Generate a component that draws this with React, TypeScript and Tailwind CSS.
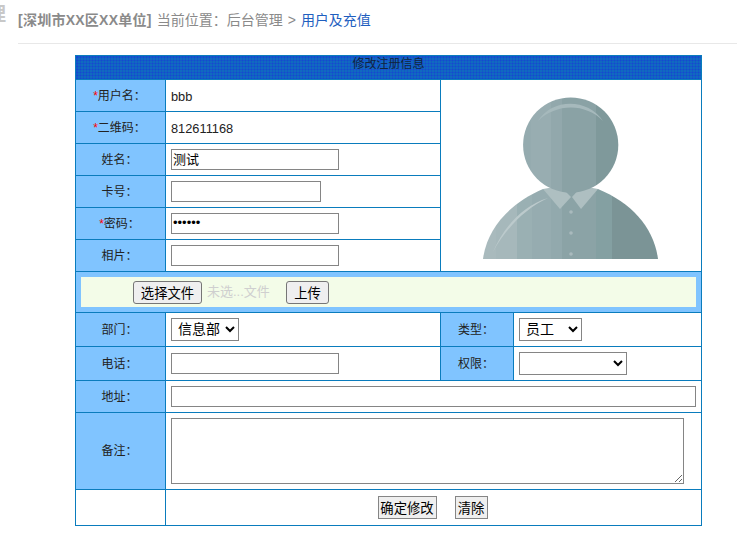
const labelCell = "border border-[#0a7cbd] bg-[#80c4ff] pr-[2px] text-center text-[12px] text-[#222]";
const valueCell = "border border-[#0a7cbd] bg-white pl-[5px] text-[12.8px] text-[#222]";
const inputClass = "block h-[21px] border border-[#858585] bg-white px-[1px] pb-[2px] text-[13px] text-black";
const selectClass = "block h-[23px] border border-[#858585] bg-white pb-[1px] pl-[2px] text-[14px] text-black";
const buttonClass = "h-[23px] rounded-[3px] border border-[#767676] bg-[#efefef] pt-[2px] text-[13.33px] text-black";
const plainButton = "h-[23px] border border-[#858585] bg-[#efefef] pt-[2px] text-[13.33px] text-black";

const Label = ({ text, required, span }: { text: string; required?: boolean; span?: number }) => (
  <td rowSpan={span} className={labelCell}>
    {required && <span className="text-[#f00]">*</span>}
    {text}：
  </td>
);

const Avatar = () => (
  <svg viewBox="441 80 260 191" className="block h-[191px] w-[260px]">
    <defs>
      <clipPath id="head">
        <circle cx="570.7" cy="145" r="47.6" />
      </clipPath>
      <clipPath id="body">
        <path d="M483 259 C487 228 510 203 543 189 L598 189 C632 203 654 228 658 259 Z" />
      </clipPath>
    </defs>
    <g clipPath="url(#body)">
      <rect x="483" y="185" width="13" height="75" fill="#a9babd" />
      <rect x="496" y="185" width="21" height="75" fill="#a6b8bb" />
      <rect x="517" y="185" width="15" height="75" fill="#9ab0b3" />
      <rect x="532" y="185" width="19" height="75" fill="#96acb0" />
      <rect x="551" y="185" width="11" height="75" fill="#92a9ad" />
      <rect x="562" y="185" width="34" height="75" fill="#8ba3a6" />
      <rect x="596" y="185" width="16" height="75" fill="#84a0a2" />
      <rect x="612" y="185" width="46" height="75" fill="#7b9496" />
    </g>
    <path d="M493 252 C503 228 522 206 548 198 C526 208 506 228 493 252 Z" fill="#bccacc" />
    <path d="M543 189 L560 209 L571 197 L560 186 Z" fill="#aebfc1" />
    <path d="M598 189 L581 209 L572 197 L582 186 Z" fill="#aebfc1" />
    <g clipPath="url(#head)">
      <rect x="523" y="97" width="8" height="96" fill="#95abaf" />
      <rect x="531" y="97" width="20" height="96" fill="#98adb1" />
      <rect x="551" y="97" width="11" height="96" fill="#92a8ac" />
      <rect x="562" y="97" width="34" height="96" fill="#8aa2a5" />
      <rect x="596" y="97" width="23" height="96" fill="#7f999b" />
    </g>
    <path d="M538 121 C552 98 588 98 603 121 C586 103 556 103 538 121 Z" fill="#a6b9bc" />
    <circle cx="571" cy="212" r="1.8" fill="#a9babd" />
    <circle cx="571" cy="233" r="1.8" fill="#a9babd" />
    <circle cx="571" cy="254" r="1.8" fill="#a9babd" />
  </svg>
);

export default function App() {
  return (
    <div
      className="relative h-[539px] w-[737px] overflow-hidden bg-white"
      style={{ fontFamily: '"Liberation Sans", "Noto Sans CJK SC", sans-serif' }}
    >
      <span className="absolute left-[-13px] top-[3px] text-[19px] font-bold leading-[24px] text-[#c8c8c8]">理</span>

      <div className="ml-[18px] flex h-[44px] items-center border-b border-[#e8e8e8] pb-[2px] text-[14px] text-[#8a8a8a]">
        <span className="font-bold tracking-[0.25px]">[深圳市XX区XX单位]</span>
        <span className="ml-[5px]">当前位置：后台管理</span>
        <span className="ml-[5px]">&gt;</span>
        <span className="ml-[5px] text-[#1f5fbf]">用户及充值</span>
      </div>

      <div className="ml-[75px] mt-[11px]">
        <table className="w-[626px] table-fixed border-collapse">
          <colgroup>
            <col className="w-[90px]" />
            <col className="w-[275px]" />
            <col className="w-[73px]" />
            <col className="w-[188px]" />
          </colgroup>
          <tbody>
            <tr className="h-[24px]">
              <td
                colSpan={4}
                className="border border-[#0a7cbd] bg-[#1169b8] bg-[image:repeating-linear-gradient(90deg,#1648d080_0_2px,#0a8cb080_2px_3px),repeating-linear-gradient(0deg,#1648d0_0_2px,#0a8cb0_2px_3px)] pb-[6px] text-center text-[12px] leading-[17px] text-[#10243d]"
              >
                修改注册信息
              </td>
            </tr>
            <tr className="h-[32px]">
              <Label text="用户名" required />
              <td className={`${valueCell} pt-[2px]`}>bbb</td>
              <td colSpan={2} rowSpan={6} className="border border-[#0a7cbd] bg-white p-0">
                <Avatar />
              </td>
            </tr>
            <tr className="h-[32px]">
              <Label text="二维码" required />
              <td className={`${valueCell} pt-[2px]`}>812611168</td>
            </tr>
            <tr className="h-[32px]">
              <Label text="姓名" />
              <td className={valueCell}>
                <input defaultValue="测试" className={`${inputClass} w-[168px]`} />
              </td>
            </tr>
            <tr className="h-[32px]">
              <Label text="卡号" />
              <td className={valueCell}>
                <input className={`${inputClass} w-[150px]`} />
              </td>
            </tr>
            <tr className="h-[32px]">
              <Label text="密码" required />
              <td className={valueCell}>
                <input type="password" defaultValue="123456" className={`${inputClass} w-[168px]`} />
              </td>
            </tr>
            <tr className="h-[32px]">
              <Label text="相片" />
              <td className={valueCell}>
                <input className={`${inputClass} w-[168px]`} />
              </td>
            </tr>
            <tr className="h-[41px]">
              <td colSpan={4} className="border border-[#0a7cbd] bg-[#80c4ff] px-[5px] py-0">
                <div className="flex h-[30px] items-center bg-[#f3fce8] pl-[52px]">
                  <button className={`${buttonClass} w-[69px]`}>选择文件</button>
                  <span className="ml-[5px] w-[67px] whitespace-nowrap text-[13px] text-[#cfcfcf]">未选...文件</span>
                  <button className={`${buttonClass} ml-[12px] w-[43px]`}>上传</button>
                </div>
              </td>
            </tr>
            <tr className="h-[34px]">
              <Label text="部门" />
              <td className={valueCell}>
                <select className={`${selectClass} w-[68px]`}>
                  <option>信息部</option>
                </select>
              </td>
              <Label text="类型" />
              <td className={valueCell}>
                <select className={`${selectClass} w-[63px]`}>
                  <option>员工</option>
                </select>
              </td>
            </tr>
            <tr className="h-[34px]">
              <Label text="电话" />
              <td className={valueCell}>
                <input className={`${inputClass} w-[168px]`} />
              </td>
              <Label text="权限" />
              <td className={valueCell}>
                <select className={`${selectClass} w-[108px]`}>
                  <option></option>
                </select>
              </td>
            </tr>
            <tr className="h-[32px]">
              <Label text="地址" />
              <td colSpan={3} className={valueCell}>
                <input className={`${inputClass} w-[525px]`} />
              </td>
            </tr>
            <tr className="h-[77px]">
              <Label text="备注" />
              <td colSpan={3} className={valueCell}>
                <textarea className="block h-[66px] w-[513px] border border-[#858585] bg-white" />
              </td>
            </tr>
            <tr className="h-[36px]">
              <td className="border border-[#0a7cbd] bg-white"></td>
              <td colSpan={3} className="border border-[#0a7cbd] bg-white">
                <div className="flex items-center justify-center gap-[18px] pr-[2px]">
                  <button className={`${plainButton} w-[59px]`}>确定修改</button>
                  <button className={`${plainButton} w-[33px]`}>清除</button>
                </div>
              </td>
            </tr>
          </tbody>
        </table>
      </div>
    </div>
  );
}
